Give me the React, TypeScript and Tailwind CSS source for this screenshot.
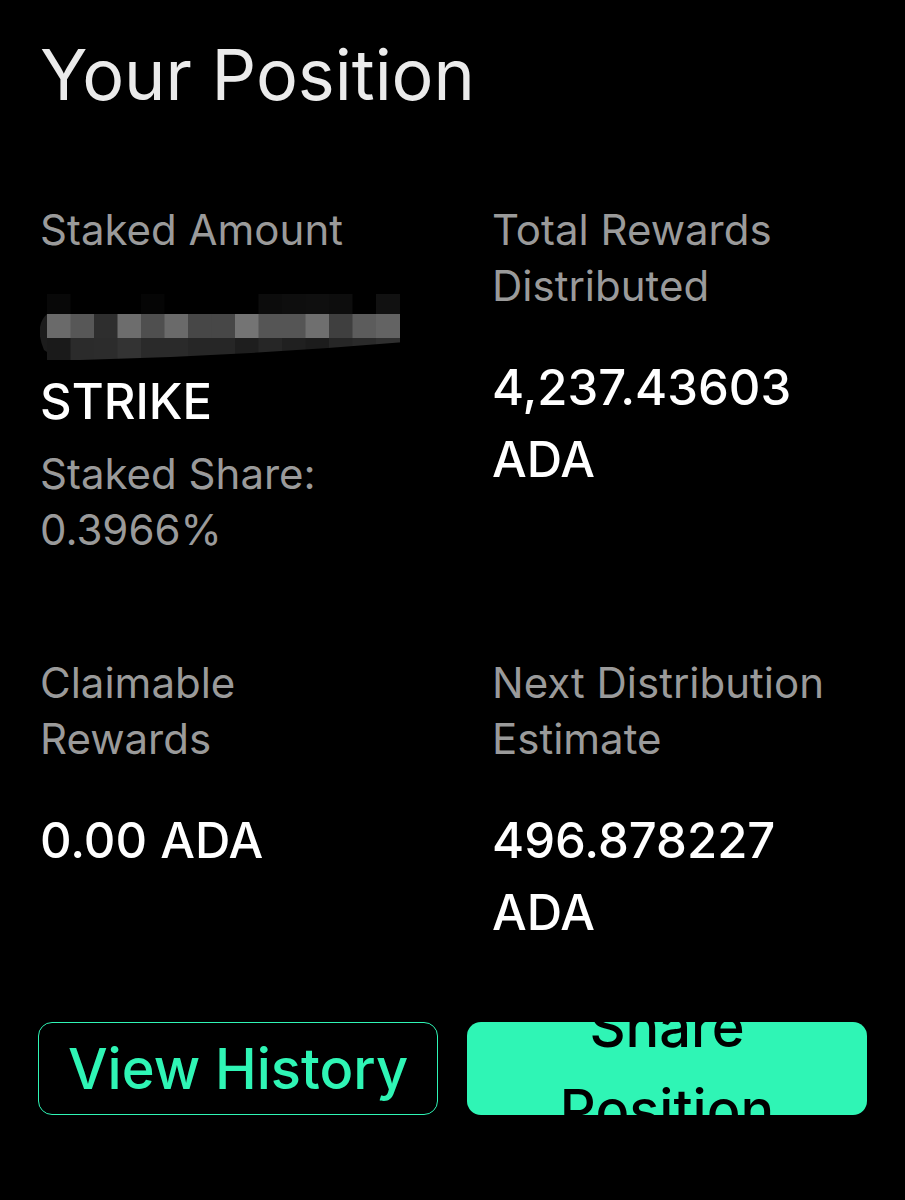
import React from "react";

const Mosaic = () => {
  const top = ["#080808", "#000", "#000", "#000", "#050505", "#000", "#000", "#000", "#000", "#0c0c0c", "#0e0e0e", "#0f0f0f", "#0d0d0d", "#000", "#111111"];
  const mid = ["#6a6a6a", "#575757", "#2e2e2e", "#6d6d6d", "#4f4f4f", "#6a6a6a", "#474747", "#474747", "#747474", "#555555", "#555555", "#6f6f6f", "#3f3f3f", "#5c5c5c", "#636363"];
  const bot = ["#1a1a1a", "#2b2b2b", "#2c2c2c", "#333333", "#2a2a2a", "#2a2a2a", "#262626", "#262626", "#1e1e1e", "#262626", "#202020", "#1c1c1c", "#262626", "#2a2a2a", "#2f2f2f"];
  const w = 23.5;
  return (
    <svg width="372" height="72" viewBox="0 0 372 72" className="block">
      {top.map((c, i) => (
        <rect key={"t" + i} x={7 + i * w} y={0} width={w + 0.5} height={20} fill={c} />
      ))}
      {mid.map((c, i) => (
        <rect key={"m" + i} x={7 + i * w} y={20} width={w + 0.5} height={24} fill={c} />
      ))}
      {bot.map((c, i) => (
        <rect key={"b" + i} x={7 + i * w} y={44} width={w + 0.5} height={22} fill={c} />
      ))}
      <path d="M40 72 L40 66 Q200 62 365 48 L372 48 L372 72 Z" fill="#000" />
      <path d="M7 72 L7 66 L60 66 L60 72 Z" fill="#000" />
      <path d="M7 20 Q-6 32 4 56 L7 58 Z" fill="#1c1c1c" />
    </svg>
  );
};

export default function App() {
  return (
    <div className="w-[905px] h-[1200px] bg-black overflow-hidden font-['Inter','Noto_Sans',sans-serif]">
      <div className="px-[40px]">
        <h1 className="pt-[36px] text-[70px] leading-[78px] text-[#ebebeb] font-normal">Your Position</h1>
        <div className="mt-[88px] grid grid-cols-[372px_372px] gap-x-[80px]">
          <div>
            <div className="text-[42px] leading-[56px] text-[#9a9a9a]">Staked Amount</div>
            <div className="mt-[36px] text-[49px] leading-[72px] text-white font-medium">
              <Mosaic />
              <div>STRIKE</div>
            </div>
            <div className="mt-[8px] text-[42px] leading-[56px] text-[#9a9a9a]">
              <div>Staked Share:</div>
              <div>0.3966%</div>
            </div>
          </div>
          <div>
            <div className="text-[42px] leading-[56px] text-[#9a9a9a]">
              <div>Total Rewards</div>
              <div>Distributed</div>
            </div>
            <div className="mt-[38px] text-[49px] leading-[72px] text-white font-medium">
              <div>4,237.43603</div>
              <div>ADA</div>
            </div>
          </div>
          <div className="mt-[97px]">
            <div className="text-[42px] leading-[56px] text-[#9a9a9a]">
              <div>Claimable</div>
              <div>Rewards</div>
            </div>
            <div className="mt-[38px] text-[49px] leading-[72px] text-white font-medium">0.00 ADA</div>
          </div>
          <div className="mt-[97px]">
            <div className="text-[42px] leading-[56px] text-[#9a9a9a] whitespace-nowrap">
              <div>Next Distribution</div>
              <div>Estimate</div>
            </div>
            <div className="mt-[38px] text-[49px] leading-[72px] text-white font-medium">
              <div>496.878227</div>
              <div>ADA</div>
            </div>
          </div>
        </div>
      </div>
      <div className="mt-[73px] px-[38px] grid grid-cols-2 gap-x-[29px]">
        <button className="h-[93px] rounded-[14px] border-[1.5px] border-[#2ff5b5] bg-black text-[#2ff5b5] text-[56px] leading-[64px] font-medium">
          View History
        </button>
        <button className="h-[93px] rounded-[14px] bg-[#2ff5b5] text-black text-[56px] leading-[83px] font-medium overflow-hidden flex items-center justify-center">
          <span className="block text-center">
            Share
            <br />
            Position
          </span>
        </button>
      </div>
    </div>
  );
}
